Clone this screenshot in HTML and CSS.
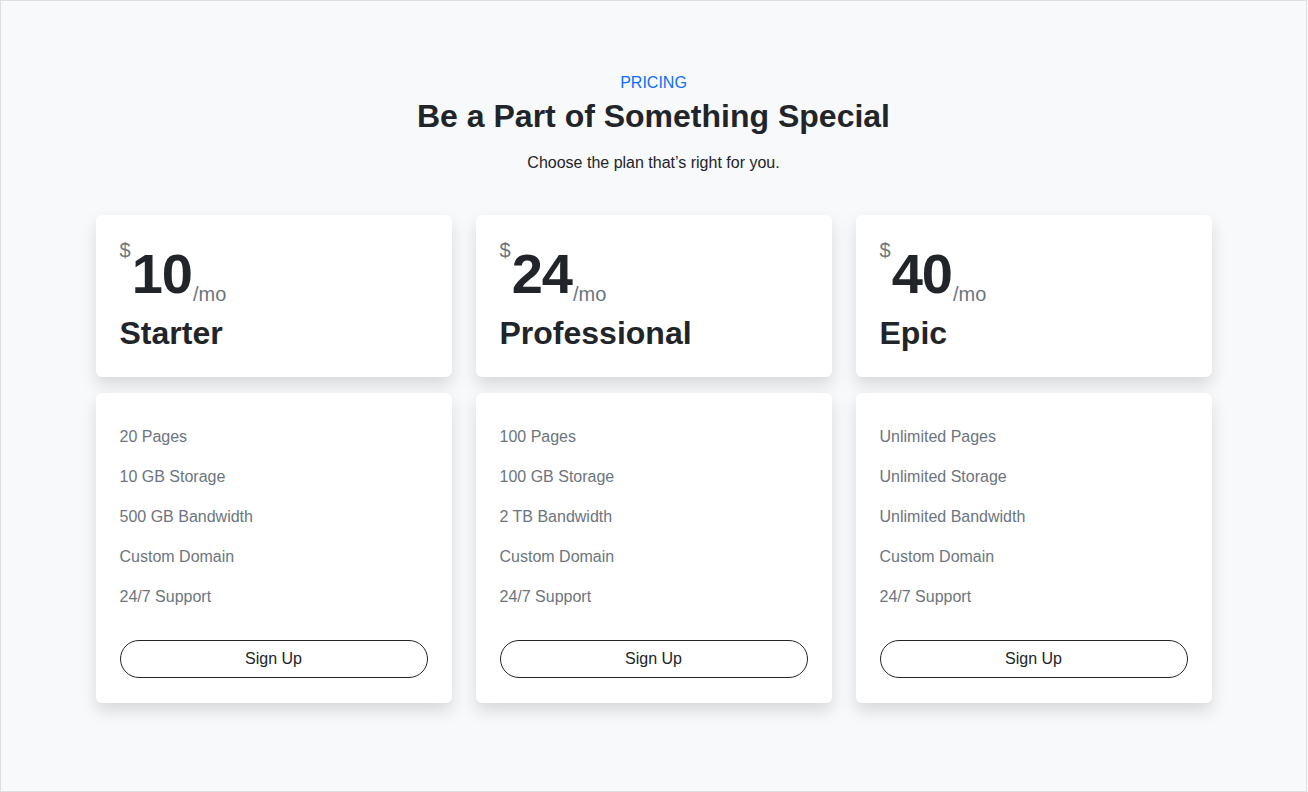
FILE: index.html
```html
<!DOCTYPE html>
<html lang="en">
<head>
<meta charset="utf-8">
<title>Pricing</title>
<link rel="stylesheet" href="styles.css">
</head>
<body>
<div class="frame">
  <section class="pricing">
    <header class="intro">
      <p class="eyebrow">PRICING</p>
      <h1 class="title">Be a Part of Something Special</h1>
      <p class="lead">Choose the plan that’s right for you.</p>
    </header>
    <div class="plans">
      <div class="plan">
        <div class="card head">
          <div class="price"><span class="cur">$</span><span class="amt">10</span><span class="per">/mo</span></div>
          <h2 class="name">Starter</h2>
        </div>
        <div class="card body">
          <ul class="features">
            <li>20 Pages</li>
            <li>10 GB Storage</li>
            <li>500 GB Bandwidth</li>
            <li>Custom Domain</li>
            <li>24/7 Support</li>
          </ul>
          <button class="btn">Sign Up</button>
        </div>
      </div>
      <div class="plan">
        <div class="card head">
          <div class="price"><span class="cur">$</span><span class="amt">24</span><span class="per">/mo</span></div>
          <h2 class="name">Professional</h2>
        </div>
        <div class="card body">
          <ul class="features">
            <li>100 Pages</li>
            <li>100 GB Storage</li>
            <li>2 TB Bandwidth</li>
            <li>Custom Domain</li>
            <li>24/7 Support</li>
          </ul>
          <button class="btn">Sign Up</button>
        </div>
      </div>
      <div class="plan">
        <div class="card head">
          <div class="price"><span class="cur">$</span><span class="amt">40</span><span class="per">/mo</span></div>
          <h2 class="name">Epic</h2>
        </div>
        <div class="card body">
          <ul class="features">
            <li>Unlimited Pages</li>
            <li>Unlimited Storage</li>
            <li>Unlimited Bandwidth</li>
            <li>Custom Domain</li>
            <li>24/7 Support</li>
          </ul>
          <button class="btn">Sign Up</button>
        </div>
      </div>
    </div>
  </section>
</div>
</body>
</html>
```
FILE: styles.css
```css
* { box-sizing: border-box; }
html, body { margin: 0; padding: 0; }
body {
  font-family: "Liberation Sans", Arial, sans-serif;
  color: #212529;
  background: #f8f9fa;
}
.frame {
  min-height: 792px;
  width: 1307px;
  border: 1px solid #dcdee0;
  background: #f8f9fa;
}
.pricing {
  padding-top: 70px;
}
.intro {
  text-align: center;
}
.eyebrow {
  margin: 0;
  font-size: 16px;
  line-height: 24px;
  color: #0d6efd;
}
.title {
  margin: 2px 0 0;
  font-size: 32px;
  line-height: 1.2;
  font-weight: 700;
  color: #212529;
}
.lead {
  margin: 16px 0 0;
  font-size: 16px;
  line-height: 24px;
  color: #212529;
}
.plans {
  margin: 40px auto 0;
  width: 1116px;
  display: grid;
  grid-template-columns: repeat(3, 1fr);
  gap: 24px;
}
.plan {
  display: flex;
  flex-direction: column;
  gap: 16px;
}
.card {
  background: #fff;
  border-radius: 6px;
  box-shadow: 0 8px 16px rgba(0, 0, 0, 0.13);
}
.head {
  padding: 25px 24px 25px;
}
.price {
  font-size: 56px;
  line-height: 1.2;
  font-weight: 700;
  color: #212529;
}
.amt {
  letter-spacing: -1px;
}
.cur {
  font-size: 20px;
  font-weight: 400;
  color: #6c757d;
  line-height: 0;
  vertical-align: 36px;
  margin-right: 1px;
}
.per {
  font-size: 20px;
  font-weight: 400;
  color: #6c757d;
  line-height: 0;
  vertical-align: -8px;
  margin-left: 1px;
}
.name {
  margin: 6px 0 0;
  font-size: 32px;
  line-height: 1.2;
  font-weight: 700;
  color: #212529;
}
.body {
  padding: 24px 24px 25px;
}
.features {
  list-style: none;
  margin: 0;
  padding: 0;
}
.features li {
  padding: 8px 0;
  font-size: 16px;
  line-height: 24px;
  color: #6c757d;
}
.btn {
  display: block;
  width: 100%;
  margin-top: 23px;
  padding: 6px 12px;
  font-family: inherit;
  font-size: 16px;
  line-height: 24px;
  color: #212529;
  background: #fff;
  border: 1px solid #212529;
  border-radius: 50px;
  cursor: pointer;
}
```
